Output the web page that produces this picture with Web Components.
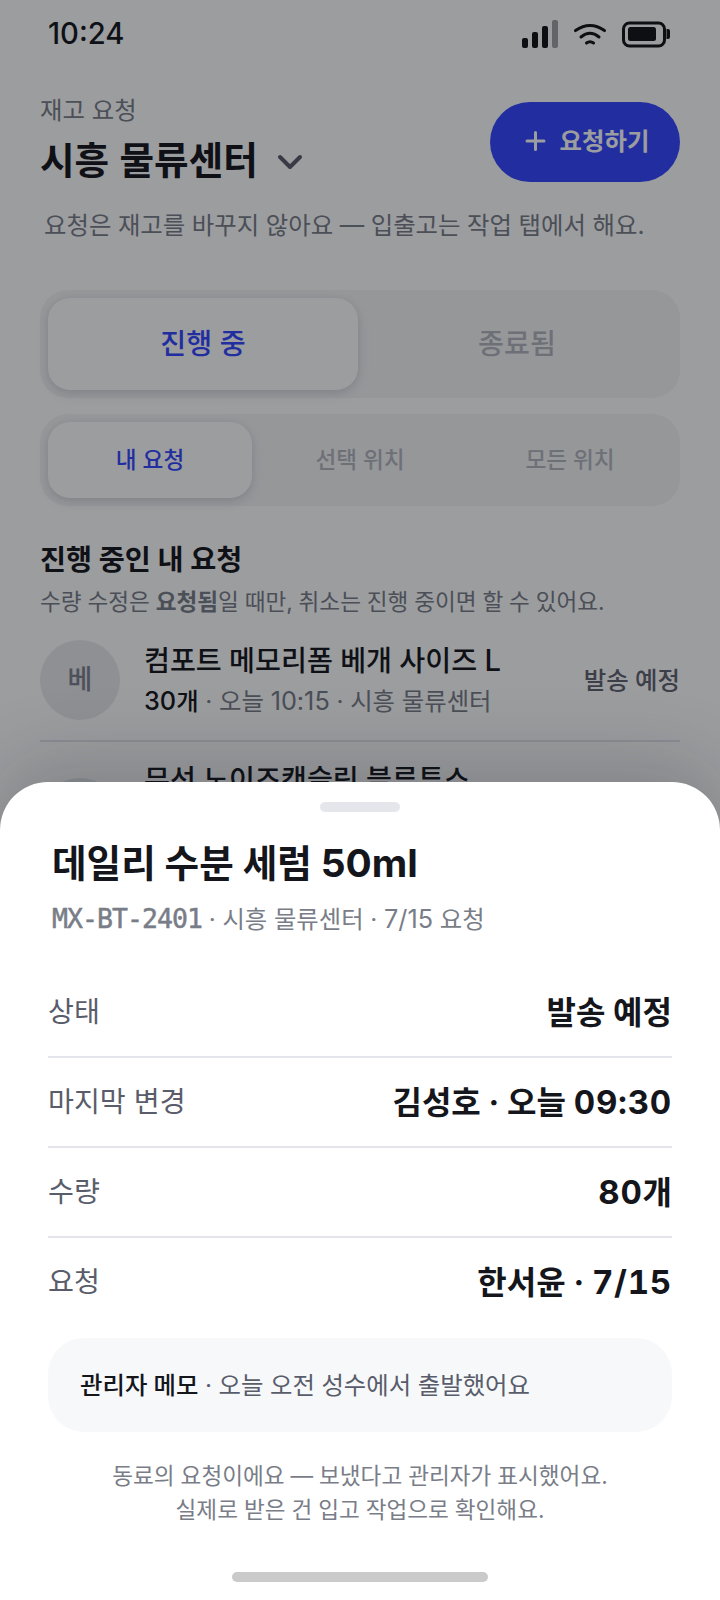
<!DOCTYPE html>
<html lang="ko">
<head>
<meta charset="utf-8">
<title>재고 요청</title>
<style>
html,body{margin:0;padding:0}
body{width:720px;height:1600px;overflow:hidden;background:#fff;font-family:Inter,"Noto Sans CJK KR",sans-serif}
</style>
</head>
<body>
<app-screen></app-screen>
<script>
const define = (name, html) => customElements.define(name, class extends HTMLElement {
  constructor() {
    super();
    const t = document.createElement('template');
    t.innerHTML = html;
    this.attachShadow({mode: 'open'}).append(t.content.cloneNode(true));
  }
});

/* Latin letters and digits, optically sized against the Hangul around them */
define('num-run', `<style>:host{font-size:1.035em;line-height:0;letter-spacing:var(--num-spacing,normal)}</style><slot></slot>`);

define('status-bar', `<style>
:host{display:flex;justify-content:space-between;align-items:center;height:68px;padding:0 49px 0 48px;box-sizing:border-box;color:#14161b}
span{font-size:29.200px;font-weight:500;line-height:40px}
svg{display:block}
</style>
<span>10:24</span>
<svg width="150" height="32" viewBox="0 0 150 32">
<g fill="#111317"><rect x="1" y="20" width="6" height="10" rx="2"/><rect x="11" y="14" width="6" height="16" rx="2"/><rect x="21" y="8" width="6" height="22" rx="2"/><rect x="31" y="2" width="6" height="28" rx="2" opacity=".4"/></g>
<g fill="none" stroke="#111317" stroke-width="3" stroke-linecap="round"><path d="M54.500 12.600Q69 2.400 83.500 12.600"/><path d="M60 19Q69 11.600 78 19"/><path d="M65.500 25Q69 22.400 72.500 25"/></g>
<rect x="102.500" y="5" width="41" height="23" rx="6" fill="none" stroke="#111317" stroke-width="3"/>
<rect x="107" y="9" width="28" height="14" rx="2.500" fill="#111317"/><path d="M145.500 11h1.500a2 2 0 0 1 2 2v6a2 2 0 0 1-2 2h-1.500z" fill="#111317"/>
</svg>`);

define('request-button', `<style>
:host{display:flex;align-items:center;justify-content:center;gap:12px;width:190px;height:80px;border-radius:40px;background:#3447ff;color:#fff;font-size:24.400px;font-weight:700;box-sizing:border-box;padding-left:3px}
svg{display:block;margin-top:-2px}span{line-height:32px;margin-top:-2px}
</style>
<svg width="24" height="24" viewBox="0 0 24 24" fill="none" stroke="#fff" stroke-width="3" stroke-linecap="round"><path d="M3 12h17M11.500 3.500v17"/></svg><span><slot></slot></span>`);

define('page-header', `<style>
:host{display:flex;justify-content:space-between;align-items:flex-start;height:120px;padding:0 40px}
.l{padding-top:26px}
.k{font-size:24.400px;line-height:32px;color:#797d87}
.t{display:flex;align-items:center;gap:18px;height:50px;margin-top:6px;font-size:37.600px;font-weight:700;color:#14161c;word-spacing:1.5px}
request-button{margin-top:34px}
svg{display:block;margin-top:10px}
</style>
<div class="l"><div class="k"><slot name="eyebrow"></slot></div>
<div class="t"><slot name="title"></slot><svg width="28" height="20" viewBox="0 0 28 20" fill="none" stroke="#595c6a" stroke-width="4" stroke-linecap="round" stroke-linejoin="round"><path d="M4 5l10 10L24 5"/></svg></div></div>
<request-button><slot name="action"></slot></request-button>`);

define('segment-item', `<style>
:host{flex:1;display:flex;align-items:center;justify-content:center;border-radius:22px;color:#b3b5be;font-weight:500}
:host([active]){background:#fff;color:#3447ff;box-shadow:0 4px 12px rgba(20,22,50,.13),0 0 6px rgba(20,22,50,.04)}
</style><slot></slot>`);

define('segmented-control', `<style>
:host{display:flex;gap:4px;box-sizing:border-box;margin:0 40px;padding:8px;height:108px;border-radius:28px;background:#f5f5f6;font-size:28.200px;line-height:40px}
:host([small]){height:92px;gap:6px;margin-top:16px;font-size:22.600px}
</style><slot></slot>`);

define('request-row', `<style>
:host{display:flex;align-items:center;margin:0 40px;padding:0 0 20px;border-bottom:2px solid #e4e5eb;line-height:36px}
.a{flex:none;width:80px;height:80px;border-radius:50%;background:#e8e9ed;display:flex;align-items:center;justify-content:center;color:#7d808c;font-size:27px;font-weight:500;margin-right:24px}
.m{flex:1}
.t{font-size:28.200px;line-height:38px;font-weight:500;color:#14161c;word-spacing:-.2px}
.s{font-size:24.400px;color:#797d87;margin-top:3px;word-spacing:-.15px}
.e{font-size:24.400px;font-weight:500;color:#5f626f}
::slotted(b){font-weight:500;color:#14161c}
:host([partial]){align-items:flex-start;padding-top:19px;border:0}
:host([partial]) .a{margin-top:17px}
</style><div class="a"><slot name="avatar"></slot></div><div class="m"><div class="t"><slot name="title"></slot></div><div class="s"><slot></slot></div></div><div class="e"><slot name="state"></slot></div>`);

define('requests-page', `<style>
:host{display:block;height:1600px;overflow:hidden;background:#fff}
.hint{margin:19px 0 47px 44px;font-size:24.400px;line-height:36px;color:#797d87;white-space:nowrap;word-spacing:-.25px}
h2{margin:33px 40px 0;font-size:28.300px;line-height:42px;font-weight:700;color:#14161c}
.sub{margin:3px 40px 20px;font-size:22.600px;line-height:36px;color:#797d87;word-spacing:-.5px}
.sub b{font-weight:700}
</style>
<status-bar></status-bar>
<page-header><span slot="eyebrow">재고 요청</span><span slot="title">시흥 물류센터</span><span slot="action">요청하기</span></page-header>
<div class="hint">요청은 재고를 바꾸지 않아요 — 입출고는 작업 탭에서 해요.</div>
<segmented-control><segment-item active>진행 중</segment-item><segment-item>종료됨</segment-item></segmented-control>
<segmented-control small><segment-item active>내 요청</segment-item><segment-item>선택 위치</segment-item><segment-item>모든 위치</segment-item></segmented-control>
<h2>진행 중인 내 요청</h2>
<div class="sub">수량 수정은 <b>요청됨</b>일 때만, 취소는 진행 중이면 할 수 있어요.</div>
<request-row><span slot="avatar">베</span><span slot="title">컴포트 메모리폼 베개 사이즈 <num-run>L</num-run></span><b><num-run>30</num-run>개</b> · 오늘 <num-run>10:15</num-run> · 시흥 물류센터<span slot="state">발송 예정</span></request-row>
<request-row partial><span slot="title">무선 노이즈캔슬링 블루투스</span></request-row>`);

define('detail-row', `<style>
:host{display:flex;justify-content:space-between;align-items:center;height:90px;box-sizing:border-box;border-bottom:2px solid #e5e6ec;line-height:40px}
:host(:last-of-type){border-bottom-color:transparent}
.k{font-size:28.200px;color:#595d6b}
.v{--num-spacing:.75px;padding-top:2px;font-size:32px;font-weight:700;color:#14161c;font-variant-numeric:tabular-nums;word-spacing:-.8px}
</style><span class="k"><slot name="label"></slot></span><span class="v"><slot></slot></span>`);

define('memo-box', `<style>
:host{display:flex;align-items:center;height:94px;box-sizing:border-box;padding:0 32px;border-radius:36px;background:#f7f8fa;font-size:24.400px;line-height:36px;color:#595d6b;word-spacing:-.3px}
::slotted(b){font-weight:500;color:#14161c}
</style><div><slot></slot></div>`);

define('detail-sheet', `<style>
:host{display:block;box-sizing:border-box;height:818px;padding:20px 48px 0;border-radius:48px 48px 0 0;background:#fff;box-shadow:0 -16px 80px rgba(16,18,30,.2)}
.grip{width:80px;height:10px;border-radius:5px;background:#e5e6ec;margin:0 auto}
h1{margin:27px 4px 0;font-size:37.600px;line-height:50px;font-weight:700;color:#14161c}
.meta{margin:12px 4px 0;font-size:24.400px;line-height:36px;color:#797d87;word-spacing:-.2px}
.code{font-family:"DejaVu Sans Mono",monospace;font-size:26.500px;line-height:0;letter-spacing:-.95px;-webkit-text-stroke:.5px #797d87}
.rows{margin-top:31px}
memo-box{margin-top:10px}
.note{margin-top:27px;text-align:center;font-size:22.600px;line-height:34px;color:#797d87;word-spacing:-.4px}
.home{width:256px;height:10px;border-radius:5px;background:#cacaca;margin:45px auto 0}
</style>
<div class="grip"></div>
<h1>데일리 수분 세럼 <num-run>50ml</num-run></h1>
<div class="meta"><span class="code">MX-BT-2401</span> · 시흥 물류센터 · <num-run>7/15</num-run> 요청</div>
<div class="rows">
<detail-row><span slot="label">상태</span>발송 예정</detail-row>
<detail-row><span slot="label">마지막 변경</span>김성호 · 오늘 <num-run>09:30</num-run></detail-row>
<detail-row><span slot="label">수량</span><num-run>80</num-run>개</detail-row>
<detail-row><span slot="label">요청</span>한서윤 · <num-run>7/15</num-run></detail-row>
</div>
<memo-box><b>관리자 메모</b> · 오늘 오전 성수에서 출발했어요</memo-box>
<div class="note">동료의 요청이에요 — 보냈다고 관리자가 표시했어요.<br>실제로 받은 건 입고 작업으로 확인해요.</div>
<div class="home"></div>`);

define('app-screen', `<style>
:host{display:block;position:relative;width:720px;height:1600px;overflow:hidden}
.scrim{position:absolute;inset:0;background:rgba(8,10,14,.4);display:flex;flex-direction:column;justify-content:flex-end}
</style>
<requests-page></requests-page>
<div class="scrim"><detail-sheet></detail-sheet></div>`);
</script>
</body>
</html>
